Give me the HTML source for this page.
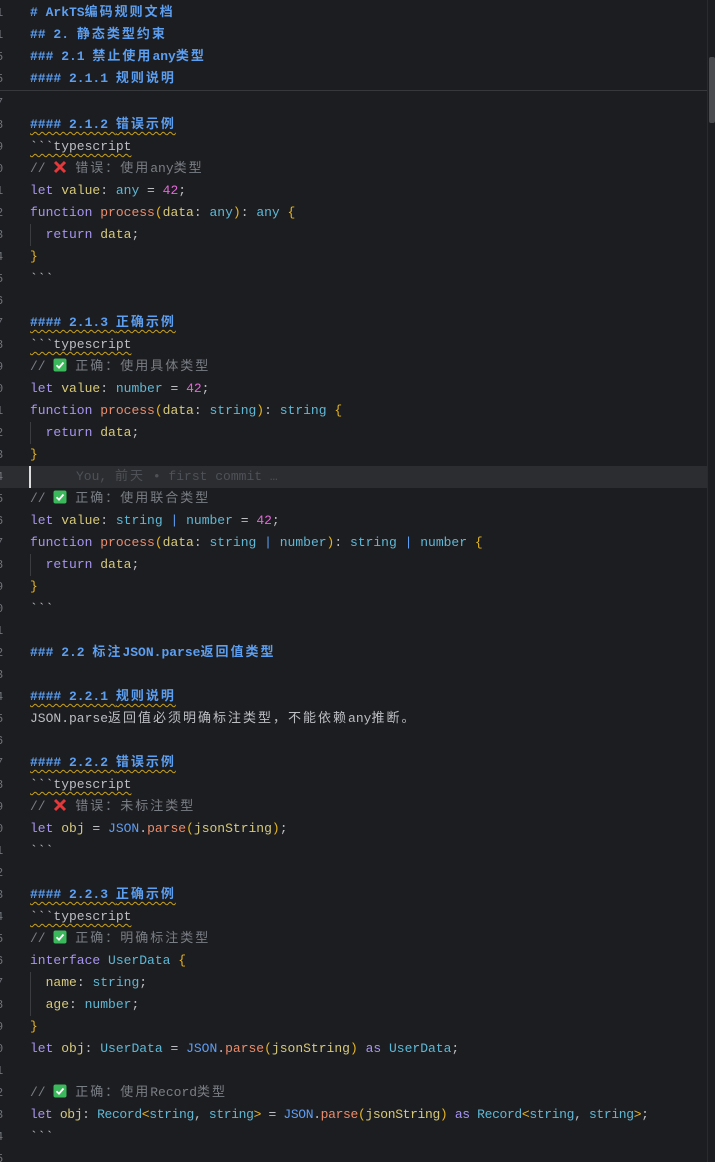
<!DOCTYPE html>
<html><head><meta charset="utf-8"><style>
html,body{margin:0;padding:0;background:#1c1d20;width:715px;height:1162px;overflow:hidden}
body{font-family:"Liberation Mono","Noto Sans CJK SC",monospace;font-size:13px;color:#bcbec4;position:relative}
.l{position:absolute;left:0;height:22px;line-height:22px;white-space:pre;width:707px}
.n{position:absolute;left:-4px;width:10px;color:#6f737a;font-size:12px}
.c{position:absolute;left:30px}
.h{color:#5c9ef0;font-weight:bold}
.sq{text-decoration:underline wavy #c9a21e;text-decoration-thickness:1px;text-underline-offset:3px}
.cm{color:#7a7e85}
.k{color:#a795f0}
.v{color:#d7c97a}
.t{color:#5fb8d6}
.f{color:#ec8c6b}
.num{color:#e26ad8}
.b{color:#e6b422}
.j{color:#5f9ef5}
i{font-style:normal;letter-spacing:2px}
svg{vertical-align:-2px}
.guide{position:absolute;left:30px;width:1px;background:#3a3c40}
</style></head><body>
<div class="l" style="top:2px"><span class="n">1</span><span class="c h"># ArkTS<i>编码规则文档</i></span></div>
<div class="l" style="top:24px"><span class="n">1</span><span class="c h">## 2. <i>静态类型约束</i></span></div>
<div class="l" style="top:46px"><span class="n">5</span><span class="c h">### 2.1 <i>禁止使用</i>any<i>类型</i></span></div>
<div class="l" style="top:68px"><span class="n">5</span><span class="c h">#### 2.1.1 <i>规则说明</i></span></div>
<div style="position:absolute;left:0;top:90px;width:707px;height:1px;background:#36383c"></div>
<div style="position:absolute;left:707px;top:0;width:1px;height:1162px;background:#2a2b2e"></div>
<div style="position:absolute;left:709px;top:57px;width:6px;height:66px;background:#4a4b4e;border-radius:2px"></div>
<div class="l" style="top:92px"><span class="n">7</span></div>
<div class="l" style="top:114px"><span class="n">8</span><span class="c h sq">#### 2.1.2 <i>错误示例</i></span></div>
<div class="l" style="top:136px"><span class="n">9</span><span class="c sq">&#96;&#96;&#96;typescript</span></div>
<div class="l" style="top:158px"><span class="n">0</span><span class="c cm">// <svg width="14" height="14" viewBox="0 0 14 14"><path d="M2 2L12 12M12 2L2 12" stroke="#e5383b" stroke-width="3"/></svg> <i>错误：使用</i>any<i>类型</i></span></div>
<div class="l" style="top:180px"><span class="n">1</span><span class="c"><span class="k">let</span> <span class="v">value</span>: <span class="t">any</span> = <span class="num">42</span>;</span></div>
<div class="l" style="top:202px"><span class="n">2</span><span class="c"><span class="k">function</span> <span class="f">process</span><span class="b">(</span><span class="v">data</span>: <span class="t">any</span><span class="b">)</span>: <span class="t">any</span> <span class="b">{</span></span></div>
<div class="l" style="top:224px"><span class="n">3</span><span class="c">  <span class="k">return</span> <span class="v">data</span>;</span></div>
<div class="l" style="top:246px"><span class="n">4</span><span class="c b">}</span></div>
<div class="l" style="top:268px"><span class="n">5</span><span class="c">&#96;&#96;&#96;</span></div>
<div class="l" style="top:290px"><span class="n">6</span></div>
<div class="l" style="top:312px"><span class="n">7</span><span class="c h sq">#### 2.1.3 <i>正确示例</i></span></div>
<div class="l" style="top:334px"><span class="n">8</span><span class="c sq">&#96;&#96;&#96;typescript</span></div>
<div class="l" style="top:356px"><span class="n">9</span><span class="c cm">// <svg width="14" height="14" viewBox="0 0 14 14"><rect x="0.5" y="0.5" width="13" height="13" rx="2" fill="#3cb85c"/><path d="M3.5 7.2L6 9.7L10.5 4.5" stroke="#fff" stroke-width="1.8" fill="none"/></svg> <i>正确：使用具体类型</i></span></div>
<div class="l" style="top:378px"><span class="n">0</span><span class="c"><span class="k">let</span> <span class="v">value</span>: <span class="t">number</span> = <span class="num">42</span>;</span></div>
<div class="l" style="top:400px"><span class="n">1</span><span class="c"><span class="k">function</span> <span class="f">process</span><span class="b">(</span><span class="v">data</span>: <span class="t">string</span><span class="b">)</span>: <span class="t">string</span> <span class="b">{</span></span></div>
<div class="l" style="top:422px"><span class="n">2</span><span class="c">  <span class="k">return</span> <span class="v">data</span>;</span></div>
<div class="l" style="top:444px"><span class="n">3</span><span class="c b">}</span></div>
<div class="l" style="top:466px;background:#2b2d31"><span class="n">4</span><span style="position:absolute;left:29px;top:0;width:2px;height:22px;background:#ddd"></span><span class="c" style="left:76px;color:#4e5157">You, <i>前天</i> • first commit …</span></div>
<div class="l" style="top:488px"><span class="n">5</span><span class="c cm">// <svg width="14" height="14" viewBox="0 0 14 14"><rect x="0.5" y="0.5" width="13" height="13" rx="2" fill="#3cb85c"/><path d="M3.5 7.2L6 9.7L10.5 4.5" stroke="#fff" stroke-width="1.8" fill="none"/></svg> <i>正确：使用联合类型</i></span></div>
<div class="l" style="top:510px"><span class="n">6</span><span class="c"><span class="k">let</span> <span class="v">value</span>: <span class="t">string</span> <span class="j">|</span> <span class="t">number</span> = <span class="num">42</span>;</span></div>
<div class="l" style="top:532px"><span class="n">7</span><span class="c"><span class="k">function</span> <span class="f">process</span><span class="b">(</span><span class="v">data</span>: <span class="t">string</span> <span class="j">|</span> <span class="t">number</span><span class="b">)</span>: <span class="t">string</span> <span class="j">|</span> <span class="t">number</span> <span class="b">{</span></span></div>
<div class="l" style="top:554px"><span class="n">8</span><span class="c">  <span class="k">return</span> <span class="v">data</span>;</span></div>
<div class="l" style="top:576px"><span class="n">9</span><span class="c b">}</span></div>
<div class="l" style="top:598px"><span class="n">0</span><span class="c">&#96;&#96;&#96;</span></div>
<div class="l" style="top:620px"><span class="n">1</span></div>
<div class="l" style="top:642px"><span class="n">2</span><span class="c h">### 2.2 <i>标注</i>JSON.parse<i>返回值类型</i></span></div>
<div class="l" style="top:664px"><span class="n">3</span></div>
<div class="l" style="top:686px"><span class="n">4</span><span class="c h sq">#### 2.2.1 <i>规则说明</i></span></div>
<div class="l" style="top:708px"><span class="n">5</span><span class="c">JSON.parse<i>返回值必须明确标注类型，不能依赖</i>any<i>推断。</i></span></div>
<div class="l" style="top:730px"><span class="n">6</span></div>
<div class="l" style="top:752px"><span class="n">7</span><span class="c h sq">#### 2.2.2 <i>错误示例</i></span></div>
<div class="l" style="top:774px"><span class="n">8</span><span class="c sq">&#96;&#96;&#96;typescript</span></div>
<div class="l" style="top:796px"><span class="n">9</span><span class="c cm">// <svg width="14" height="14" viewBox="0 0 14 14"><path d="M2 2L12 12M12 2L2 12" stroke="#e5383b" stroke-width="3"/></svg> <i>错误：未标注类型</i></span></div>
<div class="l" style="top:818px"><span class="n">0</span><span class="c"><span class="k">let</span> <span class="v">obj</span> = <span class="j">JSON</span>.<span class="f">parse</span><span class="b">(</span><span class="v">jsonString</span><span class="b">)</span>;</span></div>
<div class="l" style="top:840px"><span class="n">1</span><span class="c">&#96;&#96;&#96;</span></div>
<div class="l" style="top:862px"><span class="n">2</span></div>
<div class="l" style="top:884px"><span class="n">3</span><span class="c h sq">#### 2.2.3 <i>正确示例</i></span></div>
<div class="l" style="top:906px"><span class="n">4</span><span class="c sq">&#96;&#96;&#96;typescript</span></div>
<div class="l" style="top:928px"><span class="n">5</span><span class="c cm">// <svg width="14" height="14" viewBox="0 0 14 14"><rect x="0.5" y="0.5" width="13" height="13" rx="2" fill="#3cb85c"/><path d="M3.5 7.2L6 9.7L10.5 4.5" stroke="#fff" stroke-width="1.8" fill="none"/></svg> <i>正确：明确标注类型</i></span></div>
<div class="l" style="top:950px"><span class="n">6</span><span class="c"><span class="k">interface</span> <span class="t">UserData</span> <span class="b">{</span></span></div>
<div class="l" style="top:972px"><span class="n">7</span><span class="c">  <span class="v">name</span>: <span class="t">string</span>;</span></div>
<div class="l" style="top:994px"><span class="n">8</span><span class="c">  <span class="v">age</span>: <span class="t">number</span>;</span></div>
<div class="l" style="top:1016px"><span class="n">9</span><span class="c b">}</span></div>
<div class="l" style="top:1038px"><span class="n">0</span><span class="c"><span class="k">let</span> <span class="v">obj</span>: <span class="t">UserData</span> = <span class="j">JSON</span>.<span class="f">parse</span><span class="b">(</span><span class="v">jsonString</span><span class="b">)</span> <span class="k">as</span> <span class="t">UserData</span>;</span></div>
<div class="l" style="top:1060px"><span class="n">1</span></div>
<div class="l" style="top:1082px"><span class="n">2</span><span class="c cm">// <svg width="14" height="14" viewBox="0 0 14 14"><rect x="0.5" y="0.5" width="13" height="13" rx="2" fill="#3cb85c"/><path d="M3.5 7.2L6 9.7L10.5 4.5" stroke="#fff" stroke-width="1.8" fill="none"/></svg> <i>正确：使用</i>Record<i>类型</i></span></div>
<div class="l" style="top:1104px"><span class="n">3</span><span class="c" style="letter-spacing:-0.35px"><span class="k">let</span> <span class="v">obj</span>: <span class="t">Record</span><span class="b">&lt;</span><span class="t">string</span>, <span class="t">string</span><span class="b">&gt;</span> = <span class="j">JSON</span>.<span class="f">parse</span><span class="b">(</span><span class="v">jsonString</span><span class="b">)</span> <span class="k">as</span> <span class="t">Record</span><span class="b">&lt;</span><span class="t">string</span>, <span class="t">string</span><span class="b">&gt;</span>;</span></div>
<div class="l" style="top:1126px"><span class="n">4</span><span class="c">&#96;&#96;&#96;</span></div>
<div class="l" style="top:1148px"><span class="n">5</span></div>
<div class="guide" style="top:224px;height:22px"></div>
<div class="guide" style="top:422px;height:22px"></div>
<div class="guide" style="top:554px;height:22px"></div>
<div class="guide" style="top:972px;height:44px"></div>
</body></html>
